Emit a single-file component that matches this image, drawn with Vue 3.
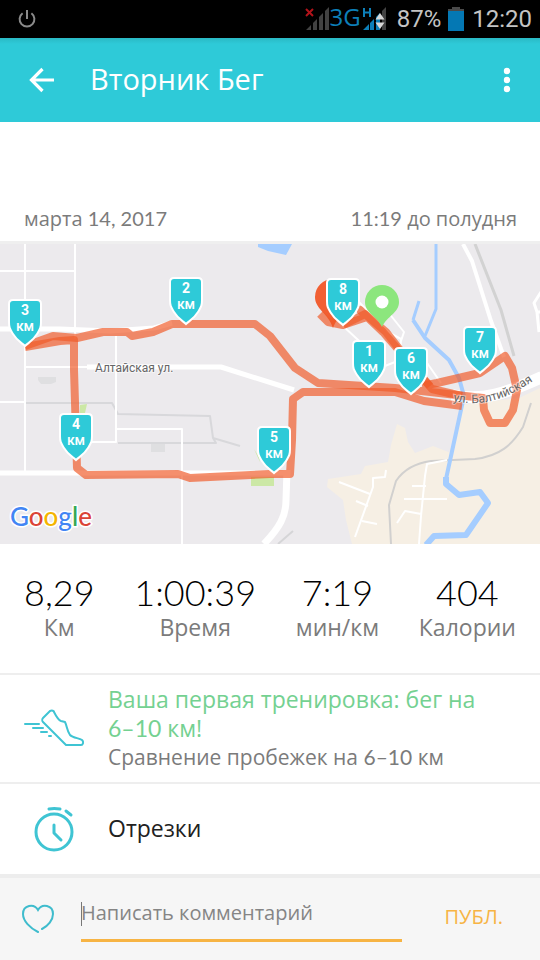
<template>
  <div class="screen">
    <div class="status-bar">
      <svg class="power" viewBox="0 0 20 20" width="20" height="20">
        <path d="M5.6 4.2a7.4 7.4 0 1 0 8.8 0M10 1v9" />
      </svg>
      <div class="status-right">
        <svg width="26" height="24" viewBox="0 0 26 24">
          <path d="M2 2l7 7M9 2l-7 7" stroke="#b3131a" stroke-width="2" />
          <path d="M2 23l5-5v5zM9 16l4-4v11h-4zM15 10l4-4v17h-4zM21 4l4-4v23h-4z" fill="#424242" />
        </svg>
        <span class="network">3G</span>
        <svg width="26" height="24" viewBox="0 0 26 24">
          <path d="M3 1v9M9 1v9M3 5.500h6" fill="none" stroke="#0d7fb8" stroke-width="2" />
          <path d="M2 23l6-6v6zM9 16l4-4v11h-4zM15 10l4-4v17h-4z" fill="#0d7fb8" />
          <path d="M21 4l4-4v23h-4z" fill="#424242" />
          <path d="M19 6l4.500 6.500h-9zM19 22l4.500-6.500h-9z" fill="#d8d8d8" />
        </svg>
        <span class="battery-text">87%</span>
        <svg width="16" height="24" viewBox="0 0 16 24">
          <path d="M4 0h8v2h4v3H0V2h4z" fill="#4a4a4a" />
          <path d="M0 4h16v20H0z" fill="#0478b4" />
        </svg>
        <span class="clock">12:20</span>
      </div>
    </div>

    <header class="app-bar">
      <button class="icon-btn" aria-label="Назад">
        <svg width="26" height="26" viewBox="0 0 26 26">
          <path d="M25 13H3M13.500 2L2.500 13l11 11" fill="none" stroke="#fff" stroke-width="3.200" />
        </svg>
      </button>
      <h1>Вторник Бег</h1>
      <button class="icon-btn" aria-label="Меню">
        <svg width="8" height="26" viewBox="0 0 8 26">
          <circle cx="4" cy="4" r="3.200" fill="#fff" />
          <circle cx="4" cy="13" r="3.200" fill="#fff" />
          <circle cx="4" cy="22" r="3.200" fill="#fff" />
        </svg>
      </button>
    </header>

    <div class="date-row">
      <span>марта <span class="num">14, 2017</span></span>
      <span><span class="num">11:19</span> до полудня</span>
    </div>

    <svg class="map" viewBox="0 244 540 300">
      <rect y="244" width="540" height="300" fill="#eceaed" />
      <!-- Пригород -->
      <path d="M540 388L519 398 460 405 451 453 433 446 415 453 408 442 405 428 397 424 391 445 388 462 365 466 361 474 328 479 327 487 343 500 346 520 352 544H540z" fill="#f6efe4" />
      <path d="M80 405l7-1-2 9h-5zM251 477h23v9h-23zM254 449l5 8 1 5z" fill="#cce8a6" />
      <path d="M38 377h18v5l-5 2H41l-3-4zM151 443h14v9h-14z" fill="#dfdfe1" />
      <path d="M258 244h34l-6 11-18-4-10-4z" fill="#a5cdff" />

      <g class="rail">
        <path d="M26 403h86l6 11 92 2 3 22 27 8M118 443h98l-3-5" stroke="#d8d8db" stroke-width="2" />
        <path d="M391 544l-2-39 7-24c8-12 20-18 35-20l44-2c25-3 37-14 48-32l8-24" stroke="#d1d0cf" stroke-width="2" />
        <path d="M475 244l26 66 13 46" stroke="#d2d2d2" stroke-width="3" />
        <path d="M278 544l15-13" stroke="#d5d5d7" stroke-width="2" />
      </g>

      <g class="road">
        <path d="M25 244v227M75 244v95M0 271h75M0 402h25M25 367h62M116 336v106H92M116 429h66v115" stroke-width="2" />
        <path d="M0 329h60l50 2 44-3 18-5M0 473h290M87 367h134l73 23" stroke-width="5" />
        <path d="M463 244l9 17 19 60 13 36" stroke-width="4" />
        <path d="M541 292l-7 11 3 9 2 20M537 312h4" stroke-width="3" />
        <path d="M357 300l31 32 13 7-1 21-15 6M343 326l27 25M388 312l16 20-3 9M425 360l16 23" stroke-width="2" />
        <path d="M287 470l-1 30c0 16-6 27-22 44" stroke-width="7" />
        <path d="M452 395c30 7 55-2 90-18" stroke-width="12" />
        <path d="M339 482l31 12M355 537l18-50v-9l12-1 1-7M356 501l12 5M362 521l15 3M419 544l2-28 4-40 2-12 20-4M412 486h14M404 499h43M397 523l8-12 16 3" stroke-width="2" />
      </g>

      <g class="river">
        <path d="M436 244v65l-11 27M419 301l-6 19" stroke-width="3" />
        <path d="M413 320l12 18 24 22 10 18 5 18-18 83" stroke-width="4" />
        <path d="M446 477v7l13 11 21-3 8 11-22 32-32 1-8 9" stroke-width="6" />
      </g>

      <text class="street" x="95" y="372">Алтайская ул.</text>

      <path d="M315 297a18 18 0 0 1 36 0c0 12-12 16-18 31-5-15-18-19-18-31z" fill="#f15f33" />
      <circle cx="333" cy="297" r="7" fill="#fff" />

      <g class="route">
        <path d="M25 346L53 336 77 338 103 332 127 332 132 336 153 332 172 324H255L270 336 295 368 318 383 395 388 483 398 484 410 490 423H505L513 410 517 390 512 368 505 356 480 373 437 383 422 386" />
        <path d="M462 406L424 401 395 392H303L293 399 292 440 290 474H270L190 478 178 474 86 475 77 468 74 370V340L60 341 25 347" />
        <path d="M320 314L328 322 343 325 367 317 360 310 383 332 402 354 432 389 462 396" />
        <path d="M343 325L365 314 386 332 410 363 430 386" />
      </g>

      <path d="M365 302a17 17 0 0 1 34 0c0 11-12 14-17 25-5-11-17-14-17-25z" fill="#8ce67d" />
      <circle cx="382" cy="302" r="6.500" fill="#fff" />

      <path id="baltic" d="M453 401C482 407 506 401 540 376" fill="none" />
      <text class="street"><textPath href="#baltic">ул. Балтийская</textPath></text>

      <g v-for="pin in pins" :key="pin.km" :transform="`translate(${pin.x} ${pin.y})`">
        <path class="pin" d="M0 0C-3-3-8-5-12-12-15-17-16-18-16-24V-42q0-4 4-4H12q4 0 4 4V-24C16-18 15-17 12-12 8-5 3-3 0 0z" />
        <text class="pin-num" y="-31">{{ pin.km }}</text>
        <text class="pin-km" y="-15">км</text>
      </g>

      <text class="google" x="10" y="526">
        <tspan v-for="(l, i) in google" :key="i" :fill="l[1]">{{ l[0] }}</tspan>
      </text>
    </svg>

    <div class="stats">
      <div v-for="s in stats" :key="s.label" class="stat">
        <div class="value">{{ s.value }}</div>
        <div class="label">{{ s.label }}</div>
      </div>
    </div>

    <div class="row compare">
      <svg class="row-icon shoe" width="60" height="38" viewBox="0 0 60 38">
        <path d="M26 2c2-1 4 0 4 1 2 4 4 8 7 9l4 1c2 4 2 9 5 13 3 3 9 3 12 5 2 2 1 5-1 5H42L19 13c-1-1-1-3 0-4z" />
        <path d="M1 15h14M9 19h10M17 23h6M25 27h2" />
      </svg>
      <div>
        <p class="green">Ваша первая тренировка: бег на <span class="num">6–10</span> км!</p>
        <p class="sub">Сравнение пробежек на <span class="num">6–10</span> км</p>
      </div>
    </div>

    <div class="row splits">
      <svg class="row-icon" width="60" height="48" viewBox="0 0 60 48">
        <circle cx="30" cy="27" r="18" />
        <path d="M25 4q5-1 11 0M42 6l5 4M30 20v8l7 7" />
      </svg>
      <p>Отрезки</p>
    </div>

    <form class="comment" @submit.prevent>
      <button type="button" class="icon-btn" aria-label="Нравится">
        <svg width="32" height="30" viewBox="0 0 32 30">
          <path d="M16 28C8 24 1 17 1 10 1 1 12-1 16 6 20-1 31 1 31 10c0 6-5 12-11 15" fill="none" stroke="#3fbccd" stroke-width="2" stroke-linecap="round" />
        </svg>
      </button>
      <label class="field">
        <input v-model="comment" type="text" placeholder="Написать комментарий" aria-label="Написать комментарий" />
      </label>
      <button type="submit" class="publish">ПУБЛ.</button>
    </form>
  </div>
</template>

<script setup>
import { ref } from 'vue';

const comment = ref('');

// Координаты острия каждой отметки на карте
const pins = [
  { km: 1, x: 369, y: 387 },
  { km: 2, x: 186, y: 324 },
  { km: 3, x: 25, y: 346 },
  { km: 4, x: 76, y: 460 },
  { km: 5, x: 274, y: 473 },
  { km: 6, x: 411, y: 394 },
  { km: 7, x: 480, y: 373 },
  { km: 8, x: 343, y: 325 },
];

const stats = [
  { value: '8,29', label: 'Км' },
  { value: '1:00:39', label: 'Время' },
  { value: '7:19', label: 'мин/км' },
  { value: '404', label: 'Калории' },
];

const google = [
  ['G', '#4285f4'],
  ['o', '#db4437'],
  ['o', '#f4b400'],
  ['g', '#4285f4'],
  ['l', '#34a853'],
  ['e', '#db4437'],
];
</script>

<style>
body {
  margin: 0;
  background: #fff;
}
</style>

<style scoped>
.screen {
  display: flex;
  flex-direction: column;
  min-height: 100vh;
  font-family: "Open Sans", "Noto Sans", sans-serif;
  color: #212121;
}

h1,
p {
  margin: 0;
  font-weight: 400;
}

svg {
  display: block;
  flex: none;
}

.num {
  font-family: Lato, sans-serif;
  white-space: nowrap;
}

.icon-btn {
  padding: 0;
  border: 0;
  background: none;
}

/* Системная строка */
.status-bar {
  display: flex;
  justify-content: space-between;
  align-items: center;
  height: 38px;
  padding: 0 8px 0 17px;
  background: #000;
}

.power path {
  fill: none;
  stroke: #8a8a8a;
  stroke-width: 2;
}

.status-right {
  display: flex;
  align-items: center;
  color: #c4c4c4;
  font-family: Roboto, sans-serif;
  font-size: 24px;
}

.network {
  padding-bottom: 4px;
  color: #0d7fb8;
  font-family: "Open Sans", sans-serif;
  line-height: 28px;
}

.battery-text {
  margin: 0 7px 0 10px;
}

.clock {
  margin-left: 8px;
}

/* Шапка */
.app-bar {
  display: flex;
  align-items: center;
  height: 84px;
  padding: 0 29px;
  background: linear-gradient(#2ab9c5, #2ecad8 6px);
}

.app-bar h1 {
  flex: 1;
  margin-left: 35px;
  padding-bottom: 3px;
  color: #fff;
  font-size: 29px;
}

.date-row {
  display: flex;
  justify-content: space-between;
  align-items: flex-end;
  height: 84px;
  padding: 27px 23px 8px 24px;
  border-bottom: 3px solid #efefef;
  color: #7b7b7b;
  font-size: 20px;
  line-height: 28px;
}

/* Карта */
.map {
  width: 100%;
  height: auto;
}

.road path,
.rail path,
.river path,
.route path {
  fill: none;
  stroke-linejoin: round;
}

.road path {
  stroke: #fff;
}

.river path {
  stroke: #a5cdff;
}

.route path {
  stroke: #f05a28;
  stroke-opacity: 0.68;
  stroke-width: 8;
}

.street {
  fill: #666;
  stroke: #fff;
  stroke-width: 2px;
  stroke-opacity: 0.5;
  paint-order: stroke;
  font-family: Roboto, sans-serif;
  font-size: 12px;
}

.pin {
  fill: #2ecad8;
  stroke: #fff;
  stroke-width: 2px;
}

.pin-num,
.pin-km {
  fill: #fff;
  text-anchor: middle;
  font-family: Roboto, sans-serif;
  font-size: 14px;
  font-weight: 700;
}

.pin-km {
  font-weight: 500;
}

.google {
  stroke: #fff;
  stroke-width: 3px;
  paint-order: stroke;
  font-family: Lato, sans-serif;
  font-size: 26px;
  font-weight: 500;
}

/* Показатели */
.stats {
  display: flex;
  justify-content: space-between;
  padding: 28px 24px 31px;
  border-bottom: 2px solid #eee;
  text-align: center;
}

.value {
  font-family: Lato, sans-serif;
  font-size: 36px;
  font-weight: 300;
  line-height: 41px;
  color: #000;
}

.label {
  color: #7b7b7b;
  font-size: 23px;
  line-height: 29px;
}

.row {
  display: flex;
  align-items: center;
  gap: 24px;
  padding: 0 24px;
}

.row-icon {
  fill: none;
  stroke: #3fc4d3;
  stroke-width: 3px;
  stroke-linejoin: round;
  stroke-linecap: round;
}

.shoe {
  stroke-width: 2px;
}

.compare {
  padding-top: 10px;
  padding-bottom: 11px;
  border-bottom: 2px solid #eee;
}

.green {
  color: #74d191;
  font-size: 23px;
  line-height: 29px;
}

.sub {
  color: #7b7b7b;
  font-size: 21px;
  line-height: 28px;
}

.splits {
  height: 90px;
  font-size: 23px;
}

.splits p {
  padding-bottom: 2px;
}

/* Комментарий */
.comment {
  display: flex;
  flex: 1;
  align-items: center;
  gap: 27px;
  padding: 0 37px 0 22px;
  border-top: 4px solid #ededed;
  background: #f6f6f6;
}

.field {
  position: relative;
  flex: 1;
}

.field::before {
  content: "";
  position: absolute;
  top: 5px;
  left: 0;
  width: 1px;
  height: 24px;
  background: #777;
}

.field input {
  box-sizing: border-box;
  width: 100%;
  height: 45px;
  padding: 0 0 10px;
  border: 0;
  border-bottom: 3px solid #f7b444;
  outline: none;
  background: none;
  color: #212121;
  font: inherit;
  font-size: 20px;
}

.field input::placeholder {
  color: #858585;
  opacity: 1;
}

.publish {
  margin-left: 16px;
  padding: 0 0 5px;
  border: 0;
  background: none;
  color: #f7b444;
  font: inherit;
  font-size: 20px;
}
</style>
